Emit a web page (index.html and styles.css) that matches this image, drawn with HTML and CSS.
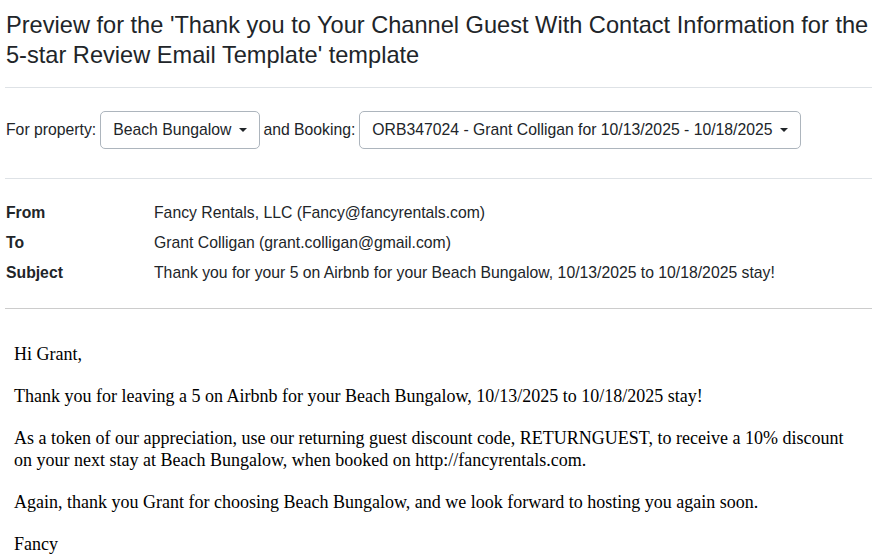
FILE: index.html
```html
<!DOCTYPE html>
<html>
<head>
<meta charset="utf-8">
<link rel="stylesheet" href="styles.css">
</head>
<body>
<div class="page">
  <h4 class="title">Preview for the 'Thank you to Your Channel Guest With Contact Information for the 5-star Review Email Template' template</h4>
  <hr class="rule">
  <div class="selectors">
    <span class="label">For property:</span>
    <button class="dropdown">Beach Bungalow <span class="caret"></span></button>
    <span class="label">and Booking:</span>
    <button class="dropdown">ORB347024 - Grant Colligan for 10/13/2025 - 10/18/2025 <span class="caret"></span></button>
  </div>
  <hr class="rule rule-2">
  <div class="headers">
    <div class="hname">From</div><div class="hval">Fancy Rentals, LLC (Fancy@fancyrentals.com)</div>
    <div class="hname">To</div><div class="hval">Grant Colligan (grant.colligan@gmail.com)</div>
    <div class="hname">Subject</div><div class="hval">Thank you for your 5 on Airbnb for your Beach Bungalow, 10/13/2025 to 10/18/2025 stay!</div>
  </div>
  <hr class="rule rule-3">
  <div class="email">
    <p>Hi Grant,</p>
    <p>Thank you for leaving a 5 on Airbnb for your Beach Bungalow, 10/13/2025 to 10/18/2025 stay!</p>
    <p>As a token of our appreciation, use our returning guest discount code, RETURNGUEST, to receive a 10% discount on your next stay at Beach Bungalow, when booked on http://fancyrentals.com.</p>
    <p>Again, thank you Grant for choosing Beach Bungalow, and we look forward to hosting you again soon.</p>
    <p>Fancy</p>
  </div>
</div>
</body>
</html>
```
FILE: styles.css
```css
html, body {
  margin: 0;
  padding: 0;
  background: #fff;
}
body {
  font-family: "Liberation Sans", Arial, sans-serif;
  color: #212529;
  font-size: 15.75px;
}
.page {
  padding: 0 11px 0 5px;
}
.title {
  margin: 0;
  padding: 10px 0 0 1px;
  font-size: 23.6px;
  font-weight: 400;
  line-height: 30px;
}
.rule {
  border: 0;
  border-top: 1px solid #dee2e6;
  margin: 17px 0 0 0;
}
.selectors {
  display: flex;
  align-items: center;
  margin-top: 23px;
  padding-left: 1px;
}
.dropdown {
  font-family: inherit;
  font-size: 15.75px;
  color: #212529;
  background: #fff;
  border: 1px solid #adb5bd;
  border-radius: 5px;
  height: 38px;
  padding: 0 12px;
  margin: 0 3px 0 4px;
  display: flex;
  align-items: center;
  gap: 8px;
}
.caret {
  width: 0;
  height: 0;
  border-left: 4px solid transparent;
  border-right: 4px solid transparent;
  border-top: 4px solid #212529;
}
.rule-2 {
  margin-top: 29px;
}
.headers {
  display: grid;
  grid-template-columns: 148px 1fr;
  margin-top: 19px;
  padding-left: 1px;
  line-height: 30px;
}
.hname {
  font-weight: 700;
}
.rule-3 {
  margin-top: 20px;
  border-top-color: #ccc;
}
.email {
  font-family: "Liberation Serif", "Times New Roman", serif;
  font-size: 18px;
  color: #000;
  padding: 34px 14px 0 9px;
  line-height: 22px;
}
.email p {
  margin: 0 0 20px 0;
}
```
